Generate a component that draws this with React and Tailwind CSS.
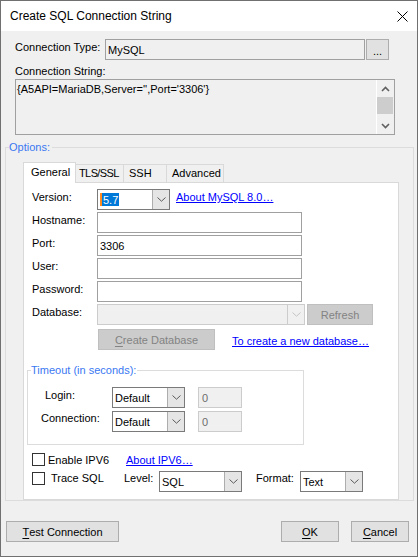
import React from "react";

const Chevron = ({ up = false }) => (
  <svg width="9" height="5" viewBox="0 0 9 5" className="block">
    <path
      d={up ? "M0.5 4.5 L4.5 0.8 L8.5 4.5" : "M0.5 0.5 L4.5 4.2 L8.5 0.5"}
      fill="none"
      stroke="currentColor"
      strokeWidth="1"
    />
  </svg>
);

const ScrollArrow = ({ up = false }) => (
  <svg width="9" height="6" viewBox="0 0 9 6" className="block">
    <path
      d={up ? "M1 5 L4.5 1.5 L8 5" : "M1 1 L4.5 4.5 L8 1"}
      fill="none"
      stroke="currentColor"
      strokeWidth="1.6"
    />
  </svg>
);

// mnemonic letter, drawn underlined like a Windows accelerator key
const Key = ({ children }) => <span className="underline underline-offset-[2px]">{children}</span>;

const TextBox = ({ value = "", width }) => (
  <div className={`flex h-[21px] items-center border border-[#a0a0a0] bg-white pl-[2px] ${width}`}>{value}</div>
);

const Combo = ({ value = "", width, disabled = false, selected = false }) => (
  <div
    className={`flex h-[21px] border ${width} ${
      disabled ? "border-[#cccccc] bg-[#f0f0f0]" : "border-[#7a7a7a] bg-white"
    }`}
  >
    <div className="flex flex-1 items-center pl-[2px]">
      {selected ? (
        <span className="flex h-[13px] items-center bg-[#0078d7] pr-px text-white">
          <span className="mr-[1px] h-[13px] w-[2px] bg-[#ff8a1f]" />
          {value}
        </span>
      ) : (
        value
      )}
    </div>
    <div
      className={`flex w-[17px] items-center justify-center border-l ${
        disabled ? "border-[#cccccc] bg-[#f0f0f0] text-[#c4c4c4]" : "border-[#adadad] bg-[#e5e5e5] text-[#5a5a5a]"
      }`}
    >
      <Chevron />
    </div>
  </div>
);

const DisabledBox = ({ value }) => (
  <div className="flex h-[21px] w-[44px] items-center border border-[#cccccc] bg-[#f0f0f0] pl-[3px] text-[#6d6d6d]">
    {value}
  </div>
);

const Field = ({ label, children }) => (
  <div className="flex h-[21px]">
    <div className="w-[65px] pt-[1px]">{label}</div>
    {children}
  </div>
);

const Tab = ({ label, active = false, width }) =>
  active ? (
    <div className={`relative z-10 -mb-px h-[21px] border border-b-0 border-[#d9d9d9] bg-white pl-[7px] pt-[2px] ${width}`}>
      {label}
    </div>
  ) : (
    <div className={`h-[18px] border border-b-0 border-l-0 border-[#d9d9d9] bg-[#f0f0f0] pt-px ${width}`}>
      {label}
    </div>
  );

const Link = ({ children, className = "" }) => (
  <span className={`text-[#0000ff] underline underline-offset-[1px] ${className}`}>{children}</span>
);

const Button = ({ children, width, className = "" }) => (
  <button className={`flex h-[21px] items-center justify-center border border-[#adadad] bg-[#e1e1e1] ${width} ${className}`}>
    {children}
  </button>
);

const CheckBox = ({ className = "" }) => (
  <div className={`h-[13px] w-[13px] shrink-0 border border-[#333333] bg-white ${className}`} />
);

export default function App() {
  return (
    <div className="flex h-[557px] w-[418px] flex-col border border-[#707070] bg-[#f0f0f0] font-['Liberation_Sans',Arial,sans-serif] text-[11px] leading-[14px] text-black">
      {/* title bar */}
      <div className="flex h-[30px] shrink-0 items-center justify-between bg-white pl-[9px] pr-[9px] text-[12px]">
        <span>Create SQL Connection String</span>
        <svg width="11" height="11" viewBox="0 0 11 11">
          <path d="M0.5 0.5 L10.5 10.5 M10.5 0.5 L0.5 10.5" stroke="#000" strokeWidth="1" />
        </svg>
      </div>

      <div className="flex flex-1 flex-col">
        <div className="ml-[14px] mt-[8px] flex">
          <div className="w-[90px] pt-px">Connection Type:</div>
          <div className="flex h-[21px] w-[260px] items-center border border-[#a0a0a0] pl-[2px]">MySQL</div>
          <button className="ml-px flex h-[21px] w-[23px] items-end justify-center border border-[#adadad] bg-[#e1e1e1] pb-[3px] leading-[10px]">
            ...
          </button>
        </div>

        <div className="ml-[14px] mt-[4px]">Connection String:</div>
        <div className="ml-[14px] mt-px flex h-[56px] w-[380px] border border-[#a0a0a0]">
          <div className="flex-1 pl-px pt-[2px]">{"{A5API=MariaDB,Server='',Port='3306'}"}</div>
          <div className="mr-px flex w-[17px] flex-col border-l border-white text-[#606060]">
            <div className="flex h-[17px] items-center justify-center">
              <ScrollArrow up />
            </div>
            <div className="h-[17px] bg-[#cdcdcd]" />
            <div className="mt-auto flex h-[17px] items-center justify-center">
              <ScrollArrow />
            </div>
          </div>
        </div>

        <fieldset className="ml-[4px] mt-[5px] w-[409px] border border-[#dcdcdc] pl-[3px]">
          <legend className="pr-[2px] text-[#3a78f2]">Options:</legend>

          <div className="ml-[14px] mt-[8px] flex h-[20px] items-end">
            <Tab label="General" active width="w-[53px]" />
            <Tab label={<span className="pl-[3px] tracking-[-0.6px]">TLS/SSL</span>} width="w-[48px]" />
            <Tab label={<span className="pl-[5px]">SSH</span>} width="w-[43px]" />
            <Tab label={<span className="pl-[5px]">Advanced</span>} width="w-[57px]" />
          </div>

          <div className="ml-[14px] h-[318px] w-[376px] border border-[#d9d9d9] bg-white pl-[3px] pt-[6px]">
            <div className="ml-[5px] flex flex-col gap-[2px]">
              <Field label="Version:">
                <Combo value="5.7" width="w-[73px]" selected />
                <Link className="ml-[6px] pt-px">About MySQL 8.0…</Link>
              </Field>
              <Field label="Hostname:">
                <TextBox width="w-[205px]" />
              </Field>
              <Field label="Port:">
                <TextBox value="3306" width="w-[205px]" />
              </Field>
              <Field label="User:">
                <TextBox width="w-[205px]" />
              </Field>
              <Field label="Password:">
                <TextBox width="w-[205px]" />
              </Field>
              <Field label="Database:">
                <Combo width="w-[208px]" disabled />
                <div className="ml-[2px] flex h-[21px] w-[66px] items-center justify-center border border-[#bfbfbf] bg-[#cccccc] text-[#838383]">
                  Refresh
                </div>
              </Field>
              <div className="mt-[2px] flex h-[21px]">
                <div className="ml-[66px] flex h-[21px] w-[117px] items-center justify-center border border-[#bfbfbf] bg-[#cccccc] text-[#838383]">
                  <Key>C</Key>reate Database
                </div>
                <Link className="ml-[17px] pt-[5px]">To create a new database…</Link>
              </div>
            </div>

            <fieldset className="mt-[13px] w-[277px] border border-[#dcdcdc] pb-[12px] pl-[3px]">
              <legend className="pr-px text-[#3a78f2]">Timeout (in seconds):</legend>
              <div className="mt-[10px] flex flex-col gap-[3px]">
                <div className="flex h-[21px]">
                  <div className="w-[81px] pl-[14px] pt-px">Login:</div>
                  <Combo value="Default" width="w-[73px]" />
                  <div className="ml-[13px]">
                    <DisabledBox value="0" />
                  </div>
                </div>
                <div className="flex h-[21px]">
                  <div className="w-[81px] pl-[10px]">Connection:</div>
                  <Combo value="Default" width="w-[73px]" />
                  <div className="ml-[13px]">
                    <DisabledBox value="0" />
                  </div>
                </div>
              </div>
            </fieldset>

            <div className="ml-[5px] mt-[8px] flex h-[13px] items-center">
              <div className="flex w-[94px] items-center">
                <CheckBox />
                <span className="ml-[3px]">Enable IPV6</span>
              </div>
              <Link>About IPV6…</Link>
            </div>

            <div className="ml-[5px] mt-[5px] flex h-[21px] items-start">
              <div className="flex w-[92px] items-start">
                <CheckBox className="mt-px" />
                <span className="ml-[6px]">Trace SQL</span>
              </div>
              <div className="w-[35px]">Level:</div>
              <Combo value="SQL" width="w-[83px]" />
              <div className="ml-[14px] w-[44px]">Format:</div>
              <Combo value="Text" width="w-[63px]" />
            </div>
          </div>
        </fieldset>

        <div className="mt-[20px] flex">
          <Button width="w-[113px]" className="ml-[5px]">
            <Key>T</Key>est Connection
          </Button>
          <Button width="w-[58px]" className="ml-auto">
            <Key>O</Key>K
          </Button>
          <Button width="w-[58px]" className="ml-[12px] mr-[8px]">
            <Key>C</Key>ancel
          </Button>
        </div>
      </div>
    </div>
  );
}
